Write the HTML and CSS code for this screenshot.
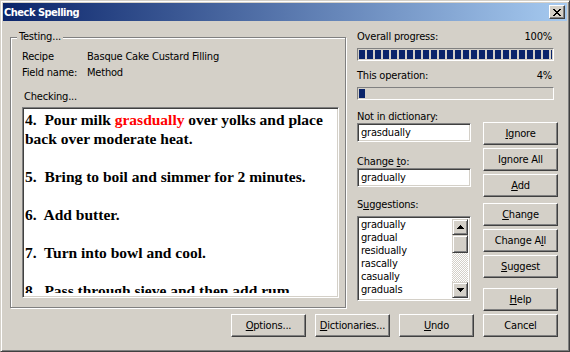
FILE: index.html
```html
<!DOCTYPE html>
<html lang="en">

<head>
    <meta charset="UTF-8">
    <title>Check Spelling</title>
    <link rel="stylesheet" href="styles.css">
</head>

<body>
    <!-- dialog window -->
    <div class="window">
        <div class="titlebar">
            <span class="title">Check Spelling</span>
            <span class="close">
                <svg width="8" height="7" viewBox="0 0 8 7" shape-rendering="crispEdges">
                    <path d="M0 0h2v1h1v1h2v-1h1v-1h2v1h-1v1h-1v1h-1v1h1v1h1v1h1v1h-2v-1h-1v-1h-2v1h-1v1h-2v-1h1v-1h1v-1h1v-1h-1v-1h-1v-1h-1z" fill="#000"/>
                </svg>
            </span>
        </div>

        <div class="content">
            <div class="top">
                <!-- left: record being tested -->
                <div class="group">
                    <span class="legend">Testing...</span>
                    <div class="info"><span class="key">Recipe</span><span>Basque Cake Custard Filling</span></div>
                    <div class="info"><span class="key">Field name:</span><span>Method</span></div>
                    <div class="checking">Checking...</div>
                    <div class="textarea">
                        <div class="doc">
                            <p>4.  Pour milk <span class="bad">grasdually</span> over yolks and place<br>back over moderate heat.</p>
                            <p>5.  Bring to boil and simmer for 2 minutes.</p>
                            <p>6.  Add butter.</p>
                            <p>7.  Turn into bowl and cool.</p>
                            <p>8.  Pass through sieve and then add rum.</p>
                        </div>
                    </div>
                </div>

                <!-- right: progress, word fields, buttons -->
                <div class="side">
                    <div class="prog-label"><span>Overall progress:</span><span>100%</span></div>
                    <div class="bar"><div class="fill" style="width:100%"></div></div>
                    <div class="prog-label second"><span>This operation:</span><span>4%</span></div>
                    <div class="bar"><div class="fill" style="width:4%"></div></div>

                    <div class="lower">
                        <div class="fields">
                            <div class="label">Not in dictionary:</div>
                            <div class="input">grasdually</div>
                            <div class="label gap">Change <u>t</u>o:</div>
                            <div class="input">gradually</div>
                            <div class="label gap2">S<u>u</u>ggestions:</div>
                            <div class="listbox">
                                <div class="items">
                                    <div>gradually</div>
                                    <div>gradual</div>
                                    <div>residually</div>
                                    <div>rascally</div>
                                    <div>casually</div>
                                    <div>graduals</div>
                                    <div>radically</div>
                                </div>
                                <div class="scrollbar">
                                    <div class="sb-btn">
                                        <svg width="7" height="4" viewBox="0 0 7 4" shape-rendering="crispEdges"><path d="M3 0h1v1h1v1h1v1h1v1h-7v-1h1v-1h1v-1h1z" fill="#000"/></svg>
                                    </div>
                                    <div class="thumb"></div>
                                    <div class="track"></div>
                                    <div class="sb-btn">
                                        <svg width="7" height="4" viewBox="0 0 7 4" shape-rendering="crispEdges"><path d="M0 0h7v1h-1v1h-1v1h-1v1h-1v-1h-1v-1h-1v-1h-1z" fill="#000"/></svg>
                                    </div>
                                </div>
                            </div>
                        </div>
                        <div class="buttons">
                            <div class="btn"><u>I</u>gnore</div>
                            <div class="btn">Ignore All</div>
                            <div class="btn"><u>A</u>dd</div>
                            <div class="btn sep"><u>C</u>hange</div>
                            <div class="btn">Change A<u>l</u>l</div>
                            <div class="btn"><u>S</u>uggest</div>
                            <div class="btn sep2"><u>H</u>elp</div>
                        </div>
                    </div>
                </div>
            </div>

            <!-- bottom row -->
            <div class="bottom">
                <div class="btn"><u>O</u>ptions...</div>
                <div class="btn"><u>D</u>ictionaries...</div>
                <div class="btn"><u>U</u>ndo</div>
                <div class="btn">Cancel</div>
            </div>
        </div>
    </div>
</body>

</html>
```

FILE: styles.css
```css
* {
    padding: 0;
    margin: 0;
    box-sizing: border-box;
}

body {
    background: #d4d0c8;
    font-family: "DejaVu Sans Condensed", "DejaVu Sans", sans-serif;
    font-stretch: condensed;
    font-size: 11px;
    letter-spacing: -0.2px;
    color: #000;
}

/* window frame */
.window {
    width: 570px;
    height: 352px;
    background: #d4d0c8;
    border: 1px solid;
    border-color: #d4d0c8 #404040 #404040 #d4d0c8;
    box-shadow: inset 1px 1px #fff, inset -1px -1px #808080;
    padding: 2px;
    display: flex;
    flex-direction: column;
}

.titlebar {
    height: 18px;
    background: linear-gradient(to right, #0a246a, #a6caf0);
    display: flex;
    align-items: center;
    justify-content: space-between;
}

.title {
    color: #fff;
    font-weight: bold;
    padding-left: 1px;
    letter-spacing: -0.5px;
}

.close {
    width: 16px;
    height: 14px;
    margin-right: 2px;
    background: #d4d0c8;
    border: 1px solid;
    border-color: #fff #404040 #404040 #fff;
    box-shadow: inset -1px -1px #808080;
    display: flex;
    align-items: center;
    justify-content: center;
}

.close svg {
    margin-left: -1px;
}

.content {
    flex: 1;
    padding: 9px 9px 12px 7px;
    display: flex;
    flex-direction: column;
    gap: 3px;
}

.top {
    display: flex;
    gap: 11px;
    align-items: flex-start;
}

/* group box */
.group {
    position: relative;
    width: 336px;
    margin-top: 7px;
    border: 1px solid #808080;
    box-shadow: inset 1px 1px #fff, 1px 1px #fff;
    padding: 11px 6px 9px 11px;
}

.legend {
    position: absolute;
    top: -8px;
    left: 6px;
    padding: 0 2px;
    background: #d4d0c8;
    line-height: 13px;
}

.info {
    display: flex;
    line-height: 16px;
}

.key {
    width: 65px;
}

.checking {
    margin-top: 9px;
    padding-left: 2px;
    line-height: 13px;
}

.textarea {
    margin-top: 4px;
    width: 317px;
    height: 191px;
    background: #fff;
    border: 1px solid;
    border-color: #808080 #fff #fff #808080;
    box-shadow: inset 1px 1px #404040, inset -1px -1px #d4d0c8;
    padding: 2px 0 0 2px;
    font-family: "Liberation Serif", serif;
    font-stretch: normal;
    font-weight: bold;
    font-size: 15.5px;
    letter-spacing: 0;
    line-height: 19px;
}

.doc {
    height: 183px;
    overflow: hidden;
}

.doc p {
    white-space: pre;
    margin-bottom: 19px;
}

.bad {
    color: #f00;
}

/* right side */
.side {
    width: 201px;
    display: flex;
    flex-direction: column;
}

.prog-label {
    width: 197px;
    display: flex;
    justify-content: space-between;
    padding-right: 2px;
    line-height: 13px;
}

.prog-label.second {
    margin-top: 8px;
}

.bar {
    margin-top: 5px;
    width: 197px;
    height: 13px;
    border: 1px solid;
    border-color: #808080 #fff #fff #808080;
    padding: 1px;
}

.fill {
    height: 100%;
    background: repeating-linear-gradient(to right, #0a246a 0 6px, transparent 6px 8px);
}

.lower {
    margin-top: 10px;
    display: flex;
    gap: 12px;
}

.fields {
    width: 114px;
    display: flex;
    flex-direction: column;
}

.label {
    line-height: 13px;
}

.label.gap {
    margin-top: 13px;
}

.label.gap2 {
    margin-top: 11px;
}

.input,
.listbox {
    background: #fff;
    border: 1px solid;
    border-color: #808080 #fff #fff #808080;
    box-shadow: inset 1px 1px #404040, inset -1px -1px #d4d0c8;
}

.input {
    height: 19px;
    padding: 0 3px;
    line-height: 17px;
}

.listbox {
    margin-top: 5px;
    height: 85px;
    padding: 2px;
    display: flex;
}

.items {
    flex: 1;
    overflow: hidden;
    padding-left: 1px;
    line-height: 13px;
}

.items div:first-child {
    margin-top: -1px;
}

.scrollbar {
    width: 16px;
    display: flex;
    flex-direction: column;
}

.sb-btn,
.thumb {
    background: #d4d0c8;
    border: 1px solid;
    border-color: #d4d0c8 #404040 #404040 #d4d0c8;
    box-shadow: inset 1px 1px #fff, inset -1px -1px #808080;
}

.sb-btn {
    height: 16px;
    display: flex;
    align-items: center;
    justify-content: center;
}

.thumb {
    height: 18px;
}

.track {
    flex: 1;
    background: repeating-conic-gradient(#fff 0 25%, #d4d0c8 0 50%) 0 0 / 2px 2px;
}

/* buttons */
.buttons {
    width: 75px;
    padding-top: 12px;
    display: flex;
    flex-direction: column;
    gap: 3px;
}

.btn {
    width: 75px;
    height: 23px;
    border: 1px solid;
    border-color: #fff #404040 #404040 #fff;
    box-shadow: inset -1px -1px #808080;
    display: flex;
    align-items: center;
    justify-content: center;
    padding-bottom: 1px;
}

.btn.sep {
    margin-top: 3px;
}

.btn.sep2 {
    margin-top: 7px;
}

.bottom {
    display: flex;
    justify-content: flex-end;
    gap: 9px;
}
```
